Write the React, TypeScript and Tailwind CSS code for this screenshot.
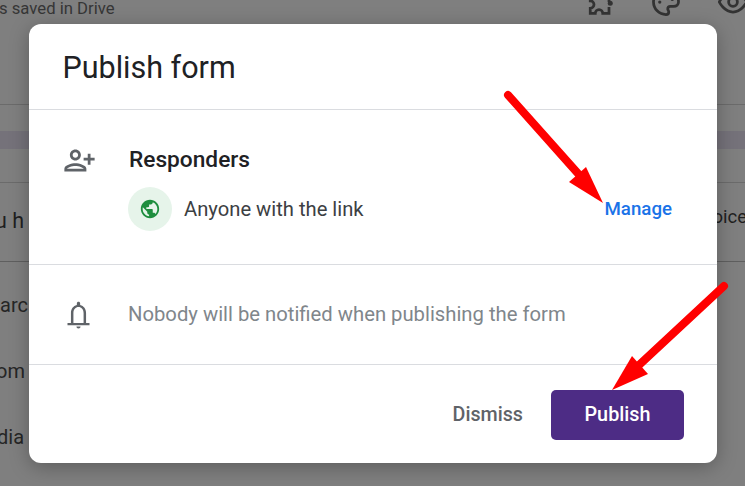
export default function App() {
  return (
    <div className="relative h-[486px] w-[745px] overflow-hidden bg-[#7f7f7f] font-['Roboto','Liberation_Sans',sans-serif]">
      {/* Page behind the dialog */}
      <div className="flex h-[105px] justify-between border-b border-[#6b6b6b] text-[#363636]">
        <span className="ml-[-1px] mt-[-1px] h-5 text-[16.7px] leading-5">s saved in Drive</span>
        <div className="mt-[-13px] flex items-start gap-[37px] pr-0">
          <svg className="h-[30px] w-[30px]" viewBox="0 0 24 24" fill="none" stroke="#333" strokeWidth="2.2">
            <path d="M20 12V7h-4a3 3 0 0 0-6 0H5v4a3 3 0 0 1 0 6v4h4a3 3 0 0 1 6 0h5v-5" />
            <circle cx="21" cy="13" r="2" fill="#333" stroke="none" />
          </svg>
          <svg className="h-[30px] w-[30px]" viewBox="0 0 24 24" fill="none" stroke="#333" strokeWidth="2.2">
            <path d="M12 2a10 10 0 0 0 0 20c1.500 0 2.200-1 2.200-2s-.8-1.500-.8-2.500 .8-2 2-2H18c2.500 0 4-1.500 4-3.500C22 6 17.500 2 12 2z" />
            <circle cx="7" cy="12" r="1.300" fill="#333" stroke="none" />
            <circle cx="17" cy="10" r="1.300" fill="#333" stroke="none" />
          </svg>
          <svg className="mr-[-3px] h-[30px] w-[30px]" viewBox="0 0 24 24" fill="none" stroke="#333" strokeWidth="2.2">
            <path d="M1 12s4-8 11-8 11 8 11 8-4 8-11 8-11-8-11-8z" />
            <circle cx="12" cy="12" r="3.500" />
          </svg>
        </div>
      </div>
      <div className="mt-[26px] h-[18px] bg-[#75727a]" />
      <div className="mt-[33px] border-t border-[#6b6b6b]" />
      <div className="flex h-[78px] items-start justify-between text-[21.5px] text-[#1f1f1f]">
        <span className="mt-[22px] ml-[-5px]">u h</span>
        <span className="mt-[21px] mr-[-2px] text-[18.5px]">oice</span>
      </div>
      <div className="border-t border-[#5f5f5f]" />
      <div className="flex flex-col text-[20px] leading-[26px] text-[#262626]">
        <span className="mt-[30px] h-[26px]">arc</span>
        <span className="mt-[40px] ml-[-4px] h-[26px]">om</span>
        <span className="mt-[40px] ml-[-3px] h-[26px]">dia</span>
      </div>

      {/* Dialog */}
      <div className="absolute left-[29px] top-[24px] flex h-[439px] w-[688px] flex-col rounded-[12px] bg-white shadow-[0_4px_20px_rgba(0,0,0,0.28)]">
        <div className="flex h-[86px] items-center border-b border-[#dadce0] pl-[33.5px] pt-[2px] text-[30.5px] text-[#202124]">
          Publish form
        </div>
        <div className="flex h-[155px] border-b border-[#dadce0] pl-[34px] pr-[45px]">
          <svg className="mt-[34px] h-[33px] w-[33px] shrink-0" viewBox="0 0 24 24" fill="#5f6368">
            <path d="M13 8c0-2.210-1.790-4-4-4S5 5.790 5 8s1.790 4 4 4 4-1.790 4-4zm-2 0c0 1.100-.9 2-2 2s-2-.9-2-2 .9-2 2-2 2 .9 2 2zM1 18v2h16v-2c0-2.660-5.330-4-8-4s-8 1.340-8 4zm2 0c.2-.71 3.300-2 6-2 2.690 0 5.780 1.280 6 2H3zm17-3v-3h3v-2h-3V7h-2v3h-3v2h3v3h2z" />
          </svg>
          <div className="ml-[32px] flex min-w-0 flex-1 flex-col">
            <div className="mt-[36px] h-[28px] pl-[1px] text-[22.7px] font-medium leading-[28px] text-[#202124]">Responders</div>
            <div className="mt-[13px] flex items-center">
              <div className="flex h-[44px] w-[44px] items-center justify-center rounded-full bg-[#e6f4ea]">
                <svg className="h-[22px] w-[22px]" viewBox="0 0 24 24" fill="#1e8e3e">
                  <path d="M12 2C6.480 2 2 6.480 2 12s4.480 10 10 10 10-4.480 10-10S17.520 2 12 2zm-1 17.930c-3.950-.49-7-3.850-7-7.930 0-.62.08-1.210.21-1.790L9 15v1c0 1.100.9 2 2 2v1.930zm6.900-2.540c-.26-.81-1-1.390-1.900-1.390h-1v-3c0-.55-.45-1-1-1H8v-2h2c.55 0 1-.45 1-1V7h2c1.100 0 2-.9 2-2v-.41c2.930 1.190 5 4.060 5 7.410 0 2.080-.8 3.970-2.100 5.390z" />
                </svg>
              </div>
              <span className="ml-[12px] mt-[1px] text-[20.2px] text-[#3c4043]">Anyone with the link</span>
              <span className="ml-auto text-[18.7px] font-medium text-[#1a73e8]">Manage</span>
            </div>
          </div>
        </div>
        <div className="flex h-[100px] items-center border-b border-[#dadce0] pl-[33px]">
          <svg className="h-[33px] w-[33px] shrink-0" viewBox="0 0 24 24" fill="#5f6368">
            <path d="M12 22.200c.9 0 1.500-.6 1.500-1.400h-3c0 .8.6 1.400 1.500 1.400zM4 18.200h16v1.700H4zM6.500 18.200V11c0-3 1.600-5.200 4.300-5.900V4c0-.7.5-1.200 1.200-1.200s1.200.5 1.200 1.200v1.100c2.700.7 4.300 2.900 4.300 5.900v7.200h-1.800V11c0-2.800-1.600-4.500-3.700-4.500S8.300 8.200 8.300 11v7.200z" />
          </svg>
          <span className="ml-[33px] text-[20.25px] text-[#80868b]">Nobody will be notified when publishing the form</span>
        </div>
        <div className="flex flex-1 items-center justify-end pr-[33px] pt-[1px]">
          <span className="text-[19.7px] font-medium text-[#5f6368]">Dismiss</span>
          <button className="ml-[28px] h-[50px] w-[133px] rounded-[5px] bg-[#4d2c85] text-[19.8px] font-medium text-white">
            Publish
          </button>
        </div>
      </div>

      {/* Red annotation arrows */}
      <svg className="pointer-events-none absolute inset-0 h-full w-full" viewBox="0 0 745 486">
        <line x1="508" y1="95" x2="582" y2="178" stroke="#ff0000" strokeWidth="8" strokeLinecap="round" />
        <polygon points="603,203 569,182 586,167" fill="#ff0000" />
        <line x1="724" y1="286" x2="638" y2="366" stroke="#ff0000" strokeWidth="8" strokeLinecap="round" />
        <polygon points="612,390 632,356 648,374" fill="#ff0000" />
      </svg>
    </div>
  );
}
